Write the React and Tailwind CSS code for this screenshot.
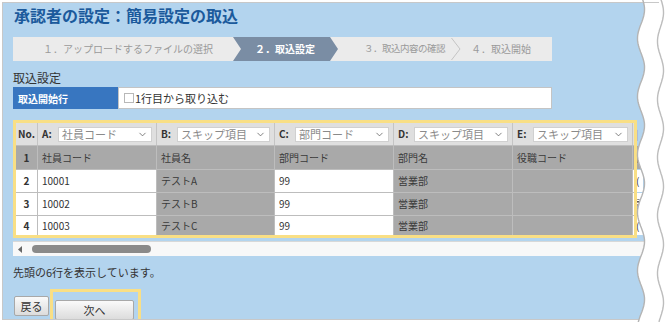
import React from "react";
import { ChevronDown } from "lucide-react";

const cols = [
  { key: "A", sel: "社員コード", w: 119, skip: false, vals: ["社員コード", "10001", "10002", "10003"] },
  { key: "B", sel: "スキップ項目", w: 118, skip: true, vals: ["社員名", "テストA", "テストB", "テストC"] },
  { key: "C", sel: "部門コード", w: 119, skip: false, vals: ["部門コード", "99", "99", "99"] },
  { key: "D", sel: "スキップ項目", w: 119, skip: true, vals: ["部門名", "営業部", "営業部", "営業部"] },
  { key: "E", sel: "スキップ項目", w: 120, skip: true, vals: ["役職コード", "", "", ""] },
];

// the next column only peeks out before the torn edge
const peek = ["|", "役", "(", "該", "("];

const rowHeights = ["h-[24px]", "h-[23px]", "h-[23px]", "h-[20px]"];

// torn paper edge on the right side
const wave = (x0, amp, period, phase) => {
  const pts = [];
  for (let y = -6; y <= 330; y += 2) {
    pts.push([x0 + amp * Math.sin(((y + phase) / period) * Math.PI * 2), y]);
  }
  return pts;
};

const TornEdge = () => {
  const a = wave(641, 3.5, 58, 5);
  const b = wave(660.5, 3, 58, 2);
  const line = (p) => p.map(([x, y], i) => `${i ? "L" : "M"}${x.toFixed(1)} ${y}`).join(" ");
  const fill = line(a) + " L670 330 L670 -6 Z";
  return (
    <svg className="absolute inset-0 pointer-events-none" width="666" height="322" viewBox="0 0 666 322">
      <path d={fill} fill="#ffffff" />
      <path d="M640 2.5 L659 2.5" stroke="#c8c8c8" strokeWidth="1" />
      <path d={line(a)} fill="none" stroke="#b4b4b4" strokeWidth="1.4" />
      <path d={line(b)} fill="none" stroke="#bdbdbd" strokeWidth="1.4" />
    </svg>
  );
};

const StepBar = () => (
  <div className="mt-[10px] flex h-[24px] w-[539px] items-center whitespace-nowrap bg-[#ebebeb] text-[10px] leading-none">
    <div className="w-[220px] shrink-0 pl-[30px] text-[#9a9a9a]">１．アップロードするファイルの選択</div>
    <div className="flex h-full w-[105px] shrink-0 items-center bg-[#7a8da4] pl-[22px] font-bold text-white [clip-path:polygon(0_0,97px_0,105px_50%,97px_100%,0_100%,8px_50%)]">
      ２．取込設定
    </div>
    <div className="w-[113px] shrink-0 pl-[26px] text-[9.5px] tracking-[-0.5px] text-[#9a9a9a]">３．取込内容の確認</div>
    <svg className="shrink-0" width="10" height="24" viewBox="0 0 10 24">
      <path d="M0.5 1 L9 12 L0.5 23" fill="none" stroke="#c4c4c4" strokeWidth="1" />
    </svg>
    <div className="pl-[10px] text-[#9a9a9a]">４．取込開始</div>
  </div>
);

const Table = () => (
  <div className="relative mt-[11px] h-[118px] w-[624px]">
    <div className="pl-[3px] pt-[3px] text-[10px] leading-none text-[#333]">
      {/* header with selects */}
      <div className="flex h-[22px] bg-[#dfdfdf]">
        <div className="flex w-[22px] shrink-0 items-center justify-center border-r border-[#c4c4c4] font-bold text-[#333]">No.</div>
        {cols.map((c) => (
          <div key={c.key} style={{ width: c.w }} className="flex shrink-0 items-center gap-[6px] border-r border-[#c4c4c4] pl-[4px] pr-[4px]">
            <span className="w-[10px] font-bold text-[#333]">{c.key}:</span>
            <div className="flex h-[15px] flex-1 items-center justify-between border border-[#d0d0d0] bg-white pl-[3px] pr-[3px] text-[11px] text-[#8a8a8a]">
              <span>{c.sel}</span>
              <ChevronDown size={11} strokeWidth={1.6} color="#555" />
            </div>
          </div>
        ))}
        <div className="flex w-[10px] shrink-0 items-center overflow-hidden pl-[3px] text-[#aaa]">{peek[0]}</div>
      </div>
      {rowHeights.map((h, r) => (
        <div key={r} className={`flex ${h} border-t border-[#bdbdbd]`}>
          <div className={`flex w-[22px] shrink-0 items-center justify-center border-r border-[#bdbdbd] font-bold ${r === 0 ? "bg-[#a9a9a9]" : "bg-white"}`}>
            {r + 1}
          </div>
          {cols.map((c) => (
            <div
              key={c.key}
              style={{ width: c.w }}
              className={`flex shrink-0 items-center border-r border-[#bdbdbd] pl-[4px] ${r === 0 || c.skip ? "bg-[#a9a9a9] text-[#3a3a3a]" : "bg-white"}`}
            >
              {c.vals[r]}
            </div>
          ))}
          <div className={`flex w-[10px] shrink-0 items-center overflow-hidden pl-[3px] ${r === 0 ? "bg-[#a9a9a9]" : "bg-white"}`}>
            {peek[r + 1]}
          </div>
        </div>
      ))}
    </div>
    <div className="pointer-events-none absolute inset-0 border-[3px] border-[#f9df85]" />
  </div>
);

export default function App() {
  return (
    <div className="relative h-[322px] w-[666px] overflow-hidden bg-white font-['Noto_Sans_CJK_JP',sans-serif]">
      <div className="ml-[2px] mt-[2px] h-[318px] w-[642px] overflow-hidden border-b border-l border-t border-[#c8c8c8] bg-[#b3d4ee] pl-[10px]">
        <div className="h-[24px] pl-[1px] text-[16px] font-bold leading-[24px] text-[#1b5a9c]">承認者の設定：簡易設定の取込</div>
        <StepBar />
        <div className="mb-[1px] pt-[9px] text-[12px] leading-[16px] text-[#333]">取込設定</div>
        <div className="flex h-[22px] w-[539px]">
          <div className="flex w-[105px] items-center bg-[#3876c0] pl-[5px] text-[10px] font-bold text-white">取込開始行</div>
          <div className="flex flex-1 items-center gap-[1px] border border-[#c4c4c4] bg-white pl-[5px] text-[11px] text-[#333]">
            <span className="inline-block h-[10px] w-[10px] border border-[#b8b8b8] bg-white" />
            <span>1行目から取り込む</span>
          </div>
        </div>
        <Table />
        {/* horizontal scrollbar */}
        <div className="mt-[3px] flex h-[15px] w-[640px] items-center border-t border-[#d8d8d8] bg-[#f8f8f8]">
          <svg width="19" height="15" viewBox="0 0 19 15">
            <path d="M5 7.5 L9 4 L9 11 Z" fill="#666" />
          </svg>
          <div className="h-[8px] w-[119px] rounded-full bg-[#8a8a8a]" />
        </div>
        <div className="mt-[9px] text-[11px] leading-[14px] text-[#333]">先頭の6行を表示しています。</div>
        <div className="mt-[10px] flex items-start">
          <button className="ml-[1px] mt-[7px] h-[20px] w-[35px] rounded-[2px] border border-[#a8a8a8] bg-gradient-to-b from-[#fafafa] to-[#dcdcdc] text-[11px] text-[#333]">
            戻る
          </button>
          <div className="ml-[1px] h-[36px] border-[3px] border-[#f9df85] pl-[2px] pr-[4px] pt-[4px]">
            <button className="h-[20px] w-[79px] rounded-[2px] border border-[#a8a8a8] bg-gradient-to-b from-[#fafafa] to-[#dcdcdc] text-[11px] text-[#333]">
              次へ
            </button>
          </div>
        </div>
      </div>
      <TornEdge />
    </div>
  );
}
